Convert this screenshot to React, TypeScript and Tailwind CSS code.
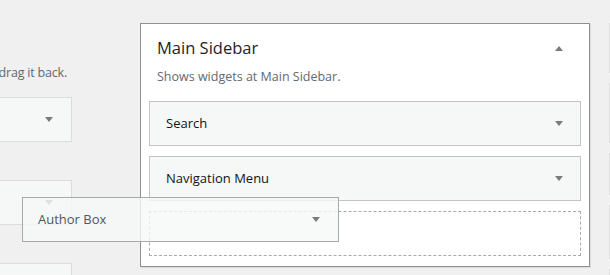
import React from "react";

const font = { fontFamily: '"Open Sans", "Noto Sans", Arial, sans-serif' };

function Arrow({ up = false, className = "" }: { up?: boolean; className?: string }) {
    return (
        <svg width="10" height="6" viewBox="0 0 10 6" className={className}>
            {up ? <polygon points="1,6 9,6 5,1" fill="#787c82" /> : <polygon points="1,0 9,0 5,5" fill="#787c82" />}
        </svg>
    );
}

function Widget({ title }: { title: string }) {
    return (
        <div className="h-[45px] border border-[#c3c4c7] bg-[#f6f7f7] flex items-center justify-between pl-[16px] pr-[16px]">
            <span className="text-[13px] font-medium text-[#101517]">{title}</span>
            <Arrow />
        </div>
    );
}

function SideBox({ className = "" }: { className?: string }) {
    return (
        <div className={`h-[45px] w-[72px] border border-l-0 border-[#dcdcde] bg-[#f6f7f7] flex items-center justify-end pr-[17px] ${className}`}>
            <Arrow />
        </div>
    );
}

export default function App() {
    return (
        <div className="relative w-[610px] h-[275px] overflow-hidden bg-[#f0f0f1]" style={font}>
            <div className="flex items-start">
                {/* available widgets column, cut off on the left */}
                <div className="w-[72px] shrink-0">
                    <div className="h-[64px]" />
                    <div className="flex justify-end pr-[5px]">
                        <p className="whitespace-nowrap text-[12.5px] tracking-[-0.2px] leading-[18px] text-[#646970]">drag it back.</p>
                    </div>
                    <SideBox className="mt-[15px]" />
                    <SideBox className="mt-[38px]" />
                    <SideBox className="mt-[38px]" />
                </div>

                {/* main sidebar */}
                <div className="ml-[68px] mt-[23px] w-[450px] shrink-0 border border-[#8c8f94] bg-white shadow-[1px_1px_1px_rgba(0,0,0,0.08)] pb-[10px]">
                    <div className="flex items-center justify-between pl-[16px] pr-[25px] pt-[13px]">
                        <h2 className="text-[16.5px] leading-[22px] text-[#1d2327]">Main Sidebar</h2>
                        <Arrow up />
                    </div>
                    <p className="pl-[16px] mt-[9px] text-[12.5px] leading-[18px] text-[#646970]">Shows widgets at Main Sidebar.</p>
                    <div className="px-[8px] mt-[15px] flex flex-col gap-[10px]">
                        <Widget title="Search" />
                        <Widget title="Navigation Menu" />
                        <div className="h-[45px] border border-dashed border-[#a7aaad]" />
                    </div>
                </div>

                {/* next column, mostly off screen */}
                <div className="ml-[19px] mt-[23px] flex flex-col gap-[10px]">
                    <div className="h-[50px] w-[20px] border border-[#e0e0e0] bg-[#f6f7f7]" />
                    <div className="h-[60px] w-[20px] border border-[#e0e0e0] bg-[#f6f7f7]" />
                    <div className="h-[42px] w-[20px] border border-[#e0e0e0] bg-[#f6f7f7]" />
                    <div className="h-[54px] w-[20px] border border-[#e0e0e0] bg-[#f6f7f7]" />
                    <div className="h-[40px] w-[20px] border border-[#e0e0e0] bg-[#f6f7f7]" />
                </div>
            </div>

            {/* dragged widget */}
            <div className="absolute left-[22px] top-[197px] w-[317px] h-[45px] border border-[#a7aaad] bg-[#f6f7f7]/80 flex items-center justify-between pl-[15px] pr-[17px]">
                <span className="text-[13px] font-medium text-[#50575e]">Author Box</span>
                <Arrow />
            </div>
        </div>
    );
}
